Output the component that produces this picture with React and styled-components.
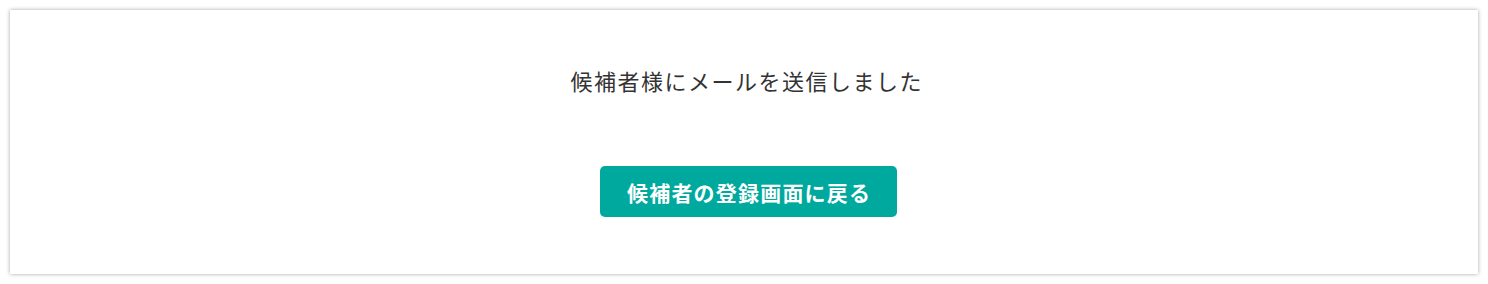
import React from "react";
import styled, { createGlobalStyle } from "styled-components";

const Global = createGlobalStyle`
  html, body { margin: 0; padding: 0; background: #ffffff; }
  body { font-family: "Noto Sans CJK JP", "Noto Sans", sans-serif; }
`;

const Page = styled.div`
  padding: 10px;
`;

const Card = styled.section`
  box-sizing: border-box;
  height: 264px;
  background: #ffffff;
  box-shadow: 0 0 4px rgba(0, 0, 0, 0.35);
  display: flex;
  flex-direction: column;
  align-items: center;
  padding-top: 55px;
  gap: 71px;
`;

const Message = styled.p`
  margin: 0 0 0 4px;
  font-size: 22px;
  line-height: 30px;
  letter-spacing: 1.5px;
  color: #333333;
  font-weight: 400;
  padding-left: 1.5px;
`;

const BackButton = styled.button`
  box-sizing: border-box;
  width: 297px;
  height: 51px;
  margin-left: 9px;
  border: none;
  border-radius: 5px;
  background: #00a99d;
  color: #ffffff;
  font-family: "Noto Sans CJK JP", "Noto Sans", sans-serif;
  font-size: 21px;
  font-weight: 700;
  letter-spacing: 1.2px;
  padding: 0 0 0 1.2px;
  cursor: pointer;
`;

export default function App() {
  return (
    <>
      <Global />
      <Page>
        <Card>
          <Message>候補者様にメールを送信しました</Message>
          <BackButton>候補者の登録画面に戻る</BackButton>
        </Card>
      </Page>
    </>
  );
}
